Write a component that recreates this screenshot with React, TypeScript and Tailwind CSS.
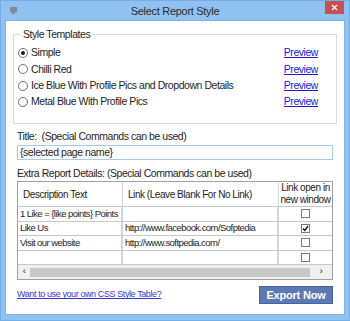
import React from "react";

const rows = [
  { text: "1 Like = {like points} Points", link: "", checked: false },
  { text: "Like Us", link: "http://www.facebook.com/Sofptedia", checked: true },
  { text: "Visit our website", link: "http://www.softpedia.com/", checked: false },
  { text: "", link: "", checked: false },
];

const templates = [
  "Simple",
  "Chilli Red",
  "Ice Blue With Profile Pics and Dropdown Details",
  "Metal Blue With Profile Pics",
];

function Radio({ on }: { on: boolean }) {
  return (
    <span className="w-[10px] h-[10px] rounded-full border border-[#6f6f6f] bg-white flex items-center justify-center shrink-0">
      {on && <span className="w-[4px] h-[4px] rounded-full bg-[#1a1a1a]" />}
    </span>
  );
}

function Check({ on }: { on: boolean }) {
  return (
    <span className="w-[9px] h-[9px] border border-[#7a7a7a] bg-white flex items-center justify-center">
      {on && (
        <svg width="7" height="7" viewBox="0 0 7 7">
          <path d="M1 3.5 L2.8 5.5 L6 1" stroke="#111" strokeWidth="1.4" fill="none" />
        </svg>
      )}
    </span>
  );
}

export default function App() {
  return (
    <div
      className="w-[350px] h-[321px] bg-[#8fc2f1] border border-[#74aee6] flex flex-col text-[10.5px] tracking-[-0.45px] text-[#1e1e1e]"
      style={{ fontFamily: '"Liberation Sans", Arial, sans-serif' }}
    >
      <div className="h-[19px] relative flex items-center justify-center">
        <svg className="absolute left-[8px] top-[5px]" width="9" height="9" viewBox="0 0 9 9">
          <rect x="1" y="1" width="7" height="5" fill="#7a8a98" />
          <rect x="3" y="6" width="3" height="2" fill="#7a8a98" />
        </svg>
        <span className="text-[11px] tracking-[-0.3px] text-[#2a2a2a] mt-[1px]">Select Report Style</span>
        <div className="absolute right-[5px] top-0 w-[19px] h-[13px] bg-[#c75050] flex items-center justify-center">
          <svg width="7" height="7" viewBox="0 0 7 7">
            <path d="M1 1 L6 6 M6 1 L1 6" stroke="#fff" strokeWidth="1.3" />
          </svg>
        </div>
      </div>
      <div className="flex-1 mx-[4px] mb-[5px] bg-white border border-[#7fb3e4] px-[11px] pt-[7px] flex flex-col">
        <fieldset className="border border-[#dcdcdc] mx-[-4px] px-[4px] pb-[13px]">
          <legend className="ml-[2px] px-[3px] leading-[13px]">Style Templates</legend>
          <div className="flex flex-col mt-[4px]">
            {templates.map((t, i) => (
              <div key={t} className="h-[16.3px] flex items-center">
                <Radio on={i === 0} />
                <span className="ml-[3px] flex-1">{t}</span>
                <span className="text-[#1a1ae0] underline mr-[14px]">Preview</span>
              </div>
            ))}
          </div>
        </fieldset>
        <div className="mt-[6px] leading-[13px]">Title:&nbsp; (Special Commands can be used)</div>
        <div className="mt-[2px] h-[15px] border border-[#a9cbea] flex items-center px-[2px]">
          {"{selected page name}"}
        </div>
        <div className="mt-[7px] leading-[13px]">Extra Report Details: (Special Commands can be used)</div>
        <div className="mt-[1px] border border-[#a0a0a0] flex flex-col text-[10px] tracking-[-0.45px]">
          <div className="flex h-[25px] border-b border-[#c8c8c8]">
            <div className="w-[105px] shrink-0 border-r border-[#d8d8d8] flex items-center pl-[5px]">Description Text</div>
            <div className="w-[156px] shrink-0 border-r border-[#d8d8d8] flex items-center pl-[5px]">Link (Leave Blank For No Link)</div>
            <div className="flex-1 flex flex-col items-center justify-center leading-[12px] whitespace-nowrap">
              <span>Link open in</span>
              <span>new window</span>
            </div>
          </div>
          {rows.map((r, i) => (
            <div key={i} className="flex h-[14.5px] border-b border-[#c8c8c8] text-[9.5px] tracking-[-0.55px]">
              <div className="w-[105px] shrink-0 border-r-2 border-[#d4d4d4] flex items-center pl-[2px] whitespace-nowrap">{r.text}</div>
              <div className="w-[156px] shrink-0 border-r-2 border-[#d4d4d4] flex items-center pl-[2px] whitespace-nowrap">{r.link}</div>
              <div className="flex-1 flex items-center justify-center">
                <Check on={r.checked} />
              </div>
            </div>
          ))}
          <div className="h-[14px] flex items-center bg-[#f0f0f0]">
            <span className="w-[12px] text-center text-[9px] font-bold text-[#555]">‹</span>
            <div className="flex-1 h-[9px] bg-[#c8c8c8]" />
            <span className="w-[22px] text-center text-[9px] font-bold text-[#555]">›</span>
          </div>
        </div>
        <div className="mt-[6px] flex items-center justify-between">
          <span className="text-[#3535e6] underline text-[9px] tracking-[-0.4px]">Want to use your own CSS Style Table?</span>
          <div className="w-[74px] h-[18px] bg-[#5b79b3] border border-[#45629c] flex items-center justify-center text-white font-bold text-[11px] tracking-[-0.2px]">
            Export Now
          </div>
        </div>
      </div>
    </div>
  );
}
